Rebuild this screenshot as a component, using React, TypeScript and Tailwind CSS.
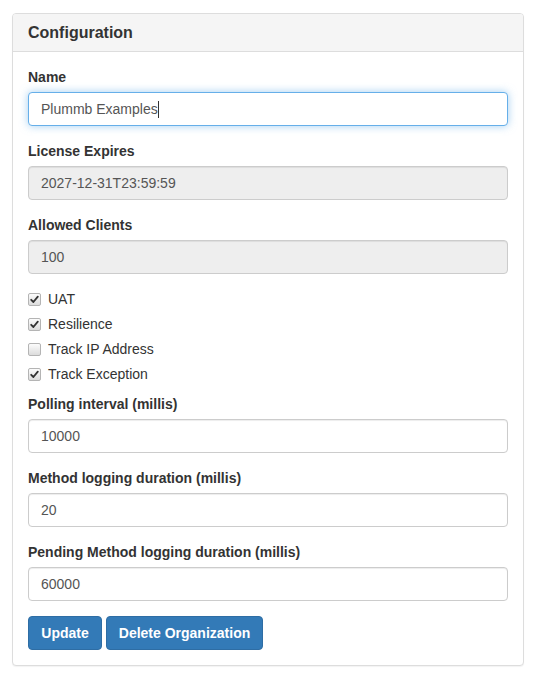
import React from "react";

const font = { fontFamily: '"Liberation Sans", Arial, Helvetica, sans-serif' };

function Label({ children }: { children: React.ReactNode }) {
  return <label className="block mb-[5px] text-[14px] leading-[20px] font-bold text-[#333]">{children}</label>;
}

function Field({ label, value, disabled }: { label: string; value: string; disabled?: boolean }) {
  return (
    <div className="mb-[15px]">
      <Label>{label}</Label>
      <input
        readOnly
        disabled={disabled}
        value={value}
        className={`block w-full h-[34px] px-[12px] py-[6px] text-[14px] leading-[20px] text-[#555] border border-[#ccc] rounded-[4px] shadow-[inset_0_1px_1px_rgba(0,0,0,0.075)] outline-none ${disabled ? "bg-[#eee]" : "bg-white"}`}
        style={font}
      />
    </div>
  );
}

function Check({ label, checked, first }: { label: string; checked: boolean; first?: boolean }) {
  return (
    <div className={`${first ? "mt-[10px]" : "mt-[5px]"} min-h-[20px] pl-[20px] relative`}>
      <label className="flex items-center text-[14px] leading-[20px] text-[#333] font-normal">
        <span className="absolute left-0 top-[4px] w-[13px] h-[13px] rounded-[2px] border border-[#b4b4b4] bg-gradient-to-b from-[#fcfcfc] to-[#dcdcdc] flex items-center justify-center">
          {checked && (
            <svg width="9" height="9" viewBox="0 0 9 9">
              <path d="M1.2 4.8 L3.4 7 L7.8 1.6" fill="none" stroke="#333" strokeWidth="1.8" strokeLinejoin="round" strokeLinecap="round" />
            </svg>
          )}
        </span>
        {label}
      </label>
    </div>
  );
}

export default function App() {
  return (
    <div className="pt-[13px] px-[12px] pb-[7px] bg-white" style={font}>
      <div className="w-[512px] border border-[#ddd] rounded-[4px] bg-white shadow-[0_1px_1px_rgba(0,0,0,0.05)]">
        <div className="bg-[#f5f5f5] border-b border-[#ddd] rounded-t-[3px] px-[15px] py-[10px]">
          <h3 className="text-[16px] leading-[17px] font-bold text-[#333]">Configuration</h3>
        </div>
        <div className="p-[15px]">
          <div className="mb-[15px]">
            <Label>Name</Label>
            <div className="flex items-center w-full h-[34px] text-[14px] leading-[20px] text-[#555] bg-white border border-[#66afe9] rounded-[4px] shadow-[0_0_8px_rgba(102,175,233,0.6)]">
              <span className="ml-[12px]">Plummb Examples</span>
              <span className="inline-block w-[1px] h-[17px] bg-[#333]" />
            </div>
          </div>
          <Field label="License Expires" value="2027-12-31T23:59:59" disabled />
          <Field label="Allowed Clients" value="100" disabled />
          <div className="mb-[10px]">
            <Check label="UAT" checked first />
            <Check label="Resilience" checked />
            <Check label="Track IP Address" checked={false} />
            <Check label="Track Exception" checked />
          </div>
          <Field label="Polling interval (millis)" value="10000" />
          <Field label="Method logging duration (millis)" value="20" />
          <Field label="Pending Method logging duration (millis)" value="60000" />
          <div className="flex gap-[4px]">
            <button className="h-[34px] w-[74px] text-[14px] leading-[20px] font-bold text-white bg-[#337ab7] border border-[#2e6da4] rounded-[4px]">
              Update
            </button>
            <button className="h-[34px] w-[157px] text-[14px] leading-[20px] font-bold text-white bg-[#337ab7] border border-[#2e6da4] rounded-[4px]">
              Delete Organization
            </button>
          </div>
        </div>
      </div>
    </div>
  );
}
